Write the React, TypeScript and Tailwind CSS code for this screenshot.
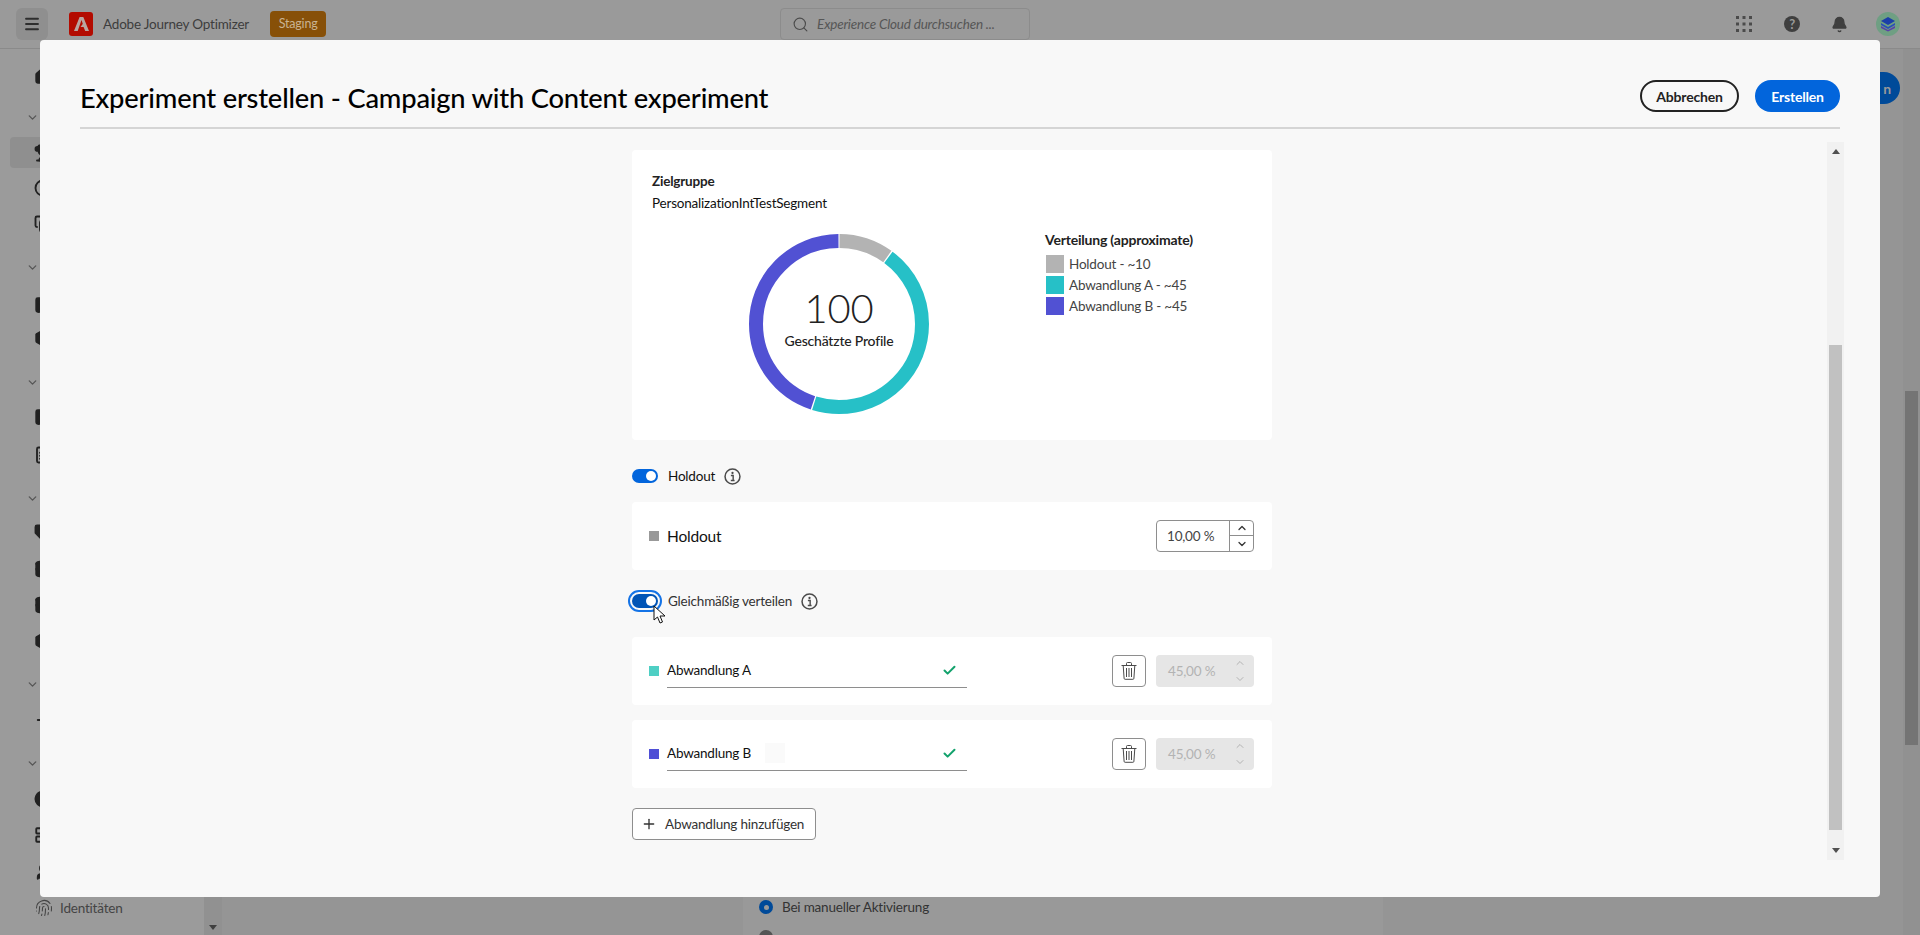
import React from 'react';
import {
  Bell,
  Box,
  Check,
  ChevronDown,
  ChevronUp,
  CircleDot,
  Copy,
  Database,
  FileText,
  Fingerprint,
  House,
  Image,
  LayoutGrid,
  LucideIcon,
  Menu,
  Minus,
  PieChart,
  Plus,
  Search,
  Tag,
  Trophy,
  User,
} from 'lucide-react';

// left rail of the app behind the dialog; only a sliver of it stays visible
const railRows: { icon?: LucideIcon; mt: string; active?: boolean; outline?: boolean }[] = [
  { icon: House, mt: 'mt-[17px]' },
  { mt: 'mt-[21px]' },
  { icon: Trophy, mt: 'mt-[10px]', active: true },
  { icon: CircleDot, mt: 'mt-[10px]', outline: true },
  { icon: Copy, mt: 'mt-[16px]', outline: true },
  { mt: 'mt-[23px]' },
  { icon: Image, mt: 'mt-[18px]' },
  { icon: Box, mt: 'mt-[13px]' },
  { mt: 'mt-[24px]' },
  { icon: Image, mt: 'mt-[15px]' },
  { icon: FileText, mt: 'mt-[18px]', outline: true },
  { mt: 'mt-[23px]' },
  { icon: Tag, mt: 'mt-[15px]' },
  { icon: Database, mt: 'mt-[16px]' },
  { icon: Database, mt: 'mt-[16px]' },
  { icon: Box, mt: 'mt-[16px]' },
  { mt: 'mt-[23px]' },
  { icon: Minus, mt: 'mt-[16px]', outline: true },
  { mt: 'mt-[23px]' },
  { icon: PieChart, mt: 'mt-[16px]' },
  { icon: LayoutGrid, mt: 'mt-[16px]', outline: true },
  { icon: User, mt: 'mt-[17px]' },
];

const legend = [
  { label: 'Holdout - ~10', color: 'bg-[#b3b3b3]' },
  { label: 'Abwandlung A - ~45', color: 'bg-[#26c0c7]' },
  { label: 'Abwandlung B - ~45', color: 'bg-[#5151d3]' },
];

function InfoIcon() {
  return (
    <svg width="17" height="17" viewBox="0 0 18 18" fill="none" className="text-[#4b4b4b]">
      <circle cx="9" cy="9" r="7.9" stroke="currentColor" strokeWidth="1.6" />
      <circle cx="9" cy="5.3" r="1.2" fill="currentColor" />
      <path d="M7.3 8h2.4v5M7.2 13.2h4" stroke="currentColor" strokeWidth="1.5" />
    </svg>
  );
}

function TrashIcon() {
  return (
    <svg width="16" height="18" viewBox="0 0 16 18" fill="none" stroke="#4b4b4b" strokeWidth="1">
      <path d="M.5 3.5h15M5.5 3.5v-2a1 1 0 0 1 1-1h3a1 1 0 0 1 1 1v2" />
      <path d="M2.2 3.5l.9 12.8a1 1 0 0 0 1 1h7.8a1 1 0 0 0 1-1l.9-12.8" />
      <path d="M5.5 6v9M8 6v9M10.5 6v9" />
    </svg>
  );
}

function Toggle({ focused }: { focused?: boolean }) {
  return (
    <span
      className={
        focused
          ? 'flex h-[14px] w-[26px] items-center justify-end rounded-full bg-[#0054b6] pr-[2px] outline-2 outline-offset-[2px] outline-[#1473e6]'
          : 'flex h-[14px] w-[26px] items-center justify-end rounded-full bg-[#0265dc] pr-[2px]'
      }
    >
      <span className="h-[10px] w-[10px] rounded-full bg-white" />
    </span>
  );
}

function Donut() {
  return (
    <div className="relative h-[180px] w-[180px] shrink-0">
      <svg width="180" height="180" viewBox="0 0 180 180" fill="none" className="-rotate-90">
        <circle cx="90" cy="90" r="83" strokeWidth="14" stroke="#b3b3b3" pathLength={100} strokeDasharray="9.8 90.2" strokeDashoffset="-0.1" />
        <circle cx="90" cy="90" r="83" strokeWidth="14" stroke="#26c0c7" pathLength={100} strokeDasharray="44.7 55.3" strokeDashoffset="-10.15" />
        <circle cx="90" cy="90" r="83" strokeWidth="14" stroke="#5151d3" pathLength={100} strokeDasharray="44.8 55.2" strokeDashoffset="-55.1" />
      </svg>
      <div className="absolute inset-0 flex flex-col items-center pt-[47px]">
        <span className="text-[40px] leading-[54px] font-light text-[#222]">100</span>
        <span className="-mt-1 text-[14px] leading-[20px] font-medium text-[#222]">Geschätzte Profile</span>
      </div>
    </div>
  );
}

function DisabledPercent() {
  return (
    <div className="flex h-8 w-[98px] items-center justify-between rounded-[4px] bg-[#e6e6e6] pr-[8px] pl-[12px] text-[13.5px] text-[#b3b3b3]">
      <span>45,00 %</span>
      <span className="flex flex-col gap-[4px]">
        <ChevronUp size={12} strokeWidth={2} />
        <ChevronDown size={12} strokeWidth={2} />
      </span>
    </div>
  );
}

function VariantRow({ name, swatch, ghost }: { name: string; swatch: string; ghost?: boolean }) {
  return (
    <div className="flex h-[68px] items-center rounded-[4px] bg-white pr-[18px] pl-[17px]">
      <span className={`h-[10px] w-[10px] ${swatch}`} />
      <div className="relative ml-2 flex h-[34px] w-[300px] items-center justify-between border-b border-[#8e8e8e] pr-[10px] text-[13.5px] text-[#111]">
        <span>{name}</span>
        {ghost && <span className="absolute top-[6px] left-[98px] h-5 w-5 bg-[#fafafa]" />}
        <Check size={15} strokeWidth={3.2} className="text-[#12a26c]" />
      </div>
      <button className="ml-auto flex h-8 w-[34px] items-center justify-center rounded-[4px] border border-[#8e8e8e] bg-white">
        <TrashIcon />
      </button>
      <div className="ml-[10px]">
        <DisabledPercent />
      </div>
    </div>
  );
}

export default function App() {
  return (
    <div className="relative h-[935px] w-[1920px] overflow-hidden bg-[#999999] [font-family:Lato,'Noto_Sans',sans-serif] tracking-[-0.2px] text-[#222]">
      {/* app behind the dialog */}
      <header className="flex h-[49px] items-center border-b border-[#8a8a8a] bg-[#9a9a9a] pl-4">
        <button className="flex h-8 w-8 items-center justify-center rounded-[6px] bg-[#8f8f8f] text-[#2e2e2e]">
          <Menu size={18} strokeWidth={2.5} />
        </button>
        <span className="ml-[21px] flex h-6 w-6 items-center justify-center rounded-[3px] bg-[#b30b00]">
          <svg width="15" height="14" viewBox="0 0 15 14" fill="#b9a5a0">
            <path d="M5.6 0h3.7L15 14h-3.8l-1.6-4H6.5l2.2-3 .1.1L7.5 3 3.7 14H0z" />
          </svg>
        </span>
        <span className="ml-[10px] text-[13.5px] text-[#3d3d3d]">Adobe Journey Optimizer</span>
        <span className="ml-[21px] flex h-[26px] w-[56px] items-center justify-center rounded-[4px] bg-[#875008] text-[12.5px] text-[#c9b391]">Staging</span>
        <div className="ml-[454px] flex h-8 w-[250px] items-center rounded-[4px] border border-[#8c8c8c] pl-[11px] text-[#4b4b4b]">
          <Search size={17} strokeWidth={1.6} />
          <span className="ml-[8px] text-[13.5px] text-[#565656] italic">Experience Cloud durchsuchen ...</span>
        </div>
        <svg width="16" height="16" viewBox="0 0 16 16" fill="#4b4b4b" className="ml-[706px]">
          <rect x="0" y="0" width="3" height="3" />
          <rect x="6.5" y="0" width="3" height="3" />
          <rect x="13" y="0" width="3" height="3" />
          <rect x="0" y="6.5" width="3" height="3" />
          <rect x="6.5" y="6.5" width="3" height="3" />
          <rect x="13" y="6.5" width="3" height="3" />
          <rect x="0" y="13" width="3" height="3" />
          <rect x="6.5" y="13" width="3" height="3" />
          <rect x="13" y="13" width="3" height="3" />
        </svg>
        <span className="ml-[32px] flex h-4 w-4 items-center justify-center rounded-full bg-[#3f3f3f] text-[13px] leading-none font-bold text-[#999]">?</span>
        <Bell size={17} fill="#3f3f3f" className="ml-[31px] text-[#3f3f3f]" />
        <span className="ml-[28px] flex h-6 w-6 items-center justify-center rounded-full bg-[#6f9f83]">
          <svg width="16" height="16" viewBox="0 0 16 16">
            <path d="M8 1l7 4-7 4-7-4z" fill="#1b3fa8" />
            <path d="M1 7l7 4 7-4v2l-7 4-7-4z" fill="#2a4fb8" />
            <path d="M1 10l7 4 7-4v2l-7 3.5L1 12z" fill="#5a3fa8" />
          </svg>
        </span>
      </header>

      <div className="flex h-[886px]">
        <aside className="flex w-[204px] flex-col bg-[#9b9b9b]">
          {railRows.map((row, i) => {
            const Icon = row.icon;
            if (!Icon) {
              return (
                <div key={i} className={`flex h-5 items-center pl-[26px] text-[#555] ${row.mt}`}>
                  <ChevronDown size={13} strokeWidth={2.4} />
                </div>
              );
            }
            if (row.active) {
              return (
                <div key={i} className={`mx-[10px] flex h-[31px] items-center rounded-[4px] bg-[#8f8f8f] pl-[24px] text-[#222] ${row.mt}`}>
                  <Icon size={18} strokeWidth={2.5} fill="#222" />
                </div>
              );
            }
            return (
              <div key={i} className={`flex h-5 items-center pl-[34px] text-[#222] ${row.mt}`}>
                <Icon size={18} strokeWidth={2.5} fill={row.outline ? 'none' : '#222'} />
              </div>
            );
          })}
          <div className="mt-[16px] flex h-5 items-center pl-[35px] text-[13.5px] text-[#444]">
            <Fingerprint size={18} strokeWidth={1.4} />
            <span className="ml-[7px]">Identitäten</span>
          </div>
        </aside>
        <div className="flex w-[18px] flex-col justify-end bg-[#919191] pb-[5px] pl-[5px]">
          <svg width="8" height="5" viewBox="0 0 8 5" fill="#3f3f3f"><path d="M0 0h8L4 5z" /></svg>
        </div>
        <main className="flex flex-1 justify-start bg-[#959595] pl-[521px]">
          <div className="h-full w-[640px] bg-[#999999] pt-[848px] pl-[16px] text-[13.5px] text-[#333]">
            <div className="flex items-center gap-[9px]">
              <span className="flex h-[14px] w-[14px] items-center justify-center rounded-full bg-[#004a99]">
                <span className="h-[5px] w-[5px] rounded-full bg-[#999]" />
              </span>
              Bei manueller Aktivierung
            </div>
            <div className="mt-[13px] h-[14px] w-[14px] rounded-full bg-[#555]" />
          </div>
        </main>
        <div className="relative w-[17px] bg-[#919191]">
          <div className="absolute top-[342px] left-[2px] h-[354px] w-[13px] bg-[#747474]" />
        </div>
      </div>
      <div className="absolute top-[72px] right-5 flex h-8 w-10 items-center justify-end rounded-r-full bg-[#004a99] pr-[9px] text-[14px] font-bold text-[#999]">n</div>

      {/* dialog */}
      <div className="absolute top-10 left-10 h-[857px] w-[1840px] rounded-[4px] bg-[#f8f8f8] px-10 pt-10 text-[#111]">
        <div className="flex h-[49px] justify-between border-b-2 border-[#d5d5d5] pb-[15px]">
          <h1 className="text-[27.3px] leading-[36px] font-medium text-black">Experiment erstellen - Campaign with Content experiment</h1>
          <div className="flex gap-4">
            <button className="h-8 w-[99px] rounded-full border-2 border-[#222] text-[14px] font-bold text-[#222]">Abbrechen</button>
            <button className="h-8 w-[85px] rounded-full bg-[#0265dc] text-[14px] font-bold text-white">Erstellen</button>
          </div>
        </div>

        <div className="mt-[13px] flex">
          <div className="flex-1 pt-2 pl-[552px]">
            <div className="w-[640px]">
              <section className="h-[290px] rounded-[4px] bg-white pt-[21px] pl-5 text-[13.5px]">
                <h2 className="leading-5 font-bold text-[#222]">Zielgruppe</h2>
                <p className="mt-[2px] leading-5 text-[#111]">PersonalizationIntTestSegment</p>
                <div className="mt-[21px] flex">
                  <div className="ml-[97px]">
                    <Donut />
                  </div>
                  <div className="-mt-1 ml-[116px] text-[#444]">
                    <h3 className="text-[14px] leading-5 font-bold text-[#222]">Verteilung (approximate)</h3>
                    <ul className="mt-[5px] flex flex-col gap-[3px] pl-[1px]">
                      {legend.map((item) => (
                        <li key={item.label} className="flex h-[18px] items-center gap-[5px]">
                          <span className={`h-[18px] w-[18px] ${item.color}`} />
                          {item.label}
                        </li>
                      ))}
                    </ul>
                  </div>
                </div>
              </section>

              <div className="mt-6 flex h-6 items-center text-[13.5px] text-[#111]">
                <Toggle />
                <span className="ml-[10px]">Holdout</span>
                <span className="ml-[9px]"><InfoIcon /></span>
              </div>

              <div className="mt-[14px] flex h-[68px] items-center rounded-[4px] bg-white pr-[18px] pl-[17px]">
                <span className="h-[10px] w-[10px] bg-[#999]" />
                <span className="ml-2 pt-[1px] text-[15.5px]">Holdout</span>
                <div className="ml-auto flex h-8 w-[98px] rounded-[4px] border border-[#8e8e8e] bg-white text-[13.5px] text-[#444]">
                  <span className="flex flex-1 items-center pl-[10px]">10,00 %</span>
                  <span className="flex w-6 flex-col border-l border-[#8e8e8e] text-[#333]">
                    <span className="flex h-1/2 items-center justify-center border-b border-[#8e8e8e]"><ChevronUp size={12} strokeWidth={2.5} /></span>
                    <span className="flex h-1/2 items-center justify-center"><ChevronDown size={12} strokeWidth={2.5} /></span>
                  </span>
                </div>
              </div>

              <div className="relative mt-[19px] flex h-6 items-center text-[13.5px] text-[#333]">
                <Toggle focused />
                <span className="ml-[10px]">Gleichmäßig verteilen</span>
                <span className="ml-[9px]"><InfoIcon /></span>
                {/* mouse pointer captured in the shot */}
                <svg width="14" height="19" viewBox="0 0 14 19" className="absolute top-[16px] left-[21px]">
                  <path d="M1 1v14l3.5-3 2.5 6 2.5-1-2.5-6H12z" fill="#fff" stroke="#111" strokeWidth="1" strokeLinejoin="round" />
                </svg>
              </div>

              <div className="mt-6 flex flex-col gap-[15px]">
                <VariantRow name="Abwandlung A" swatch="bg-[#4ecfc4]" />
                <VariantRow name="Abwandlung B" swatch="bg-[#4f4fd6]" ghost />
              </div>

              <button className="mt-5 flex h-8 w-[184px] items-center rounded-[4px] border border-[#8e8e8e] bg-white pl-[8px] text-[13.5px] text-[#333]">
                <Plus size={16} strokeWidth={2} />
                <span className="ml-[8px]">Abwandlung hinzufügen</span>
              </button>
            </div>
          </div>

          <div className="-mr-1 flex h-[718px] w-[17px] flex-col items-center bg-[#f1f1f1]">
            <svg width="8" height="5" viewBox="0 0 8 5" fill="#505050" className="mt-[7px]"><path d="M0 5h8L4 0z" /></svg>
            <div className="mt-[191px] h-[485px] w-[13px] bg-[#c1c1c1]" />
            <svg width="8" height="5" viewBox="0 0 8 5" fill="#505050" className="mt-[18px]"><path d="M0 0h8L4 5z" /></svg>
          </div>
        </div>
      </div>
    </div>
  );
}
